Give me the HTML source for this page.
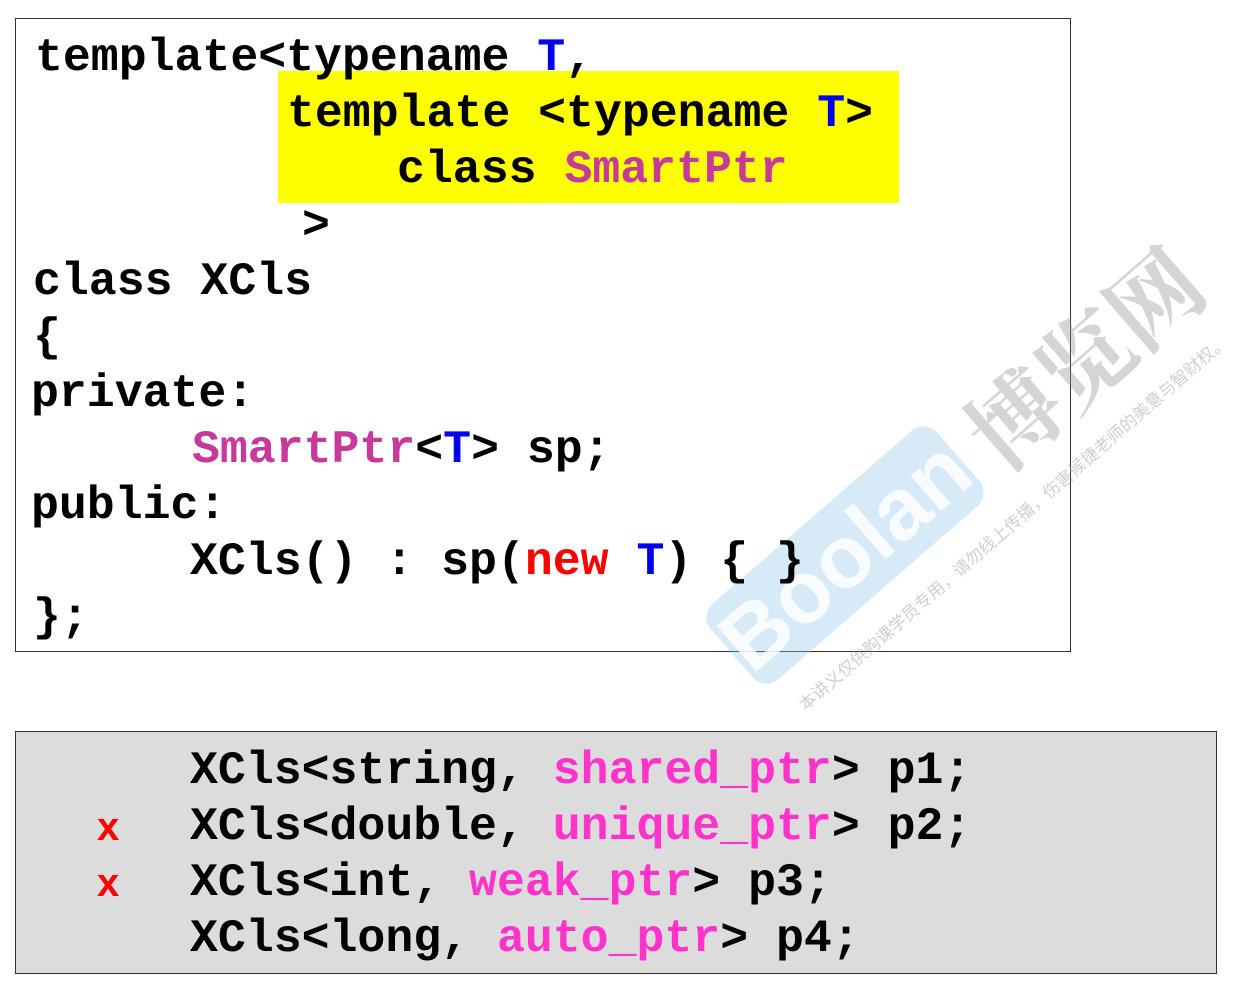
<!DOCTYPE html>
<html><head><meta charset="utf-8"><style>
body{margin:0;width:1243px;height:993px;background:#fff;position:relative;overflow:hidden;font-family:"Liberation Mono",monospace;font-weight:bold;font-size:46.5px;}
.b{position:absolute;}
.l{position:absolute;line-height:56px;height:56px;white-space:pre;color:#000;}
.bl{color:#0000ee}.pk{color:#c8399e}.rd{color:#ff0000}.mg{color:#ff33cc}
.x{font-family:"Liberation Sans",sans-serif;color:#ff0000;font-size:40px;}
.w{position:absolute;white-space:nowrap;transform:translate(-50%,-50%) rotate(-41deg);}
</style></head><body>
<div class="b" style="left:15px;top:18px;width:1054px;height:632px;border:1.5px solid #333;"></div>
<div class="b" style="left:278px;top:71px;width:621px;height:132px;background:#ffff00;"></div>
<div class="b" style="left:15px;top:731px;width:1200px;height:241px;border:1.5px solid #333;background:#dcdcdc;"></div>
<div class="w" style="left:845px;top:555px;width:300px;height:100px;line-height:100px;text-align:center;background:rgba(140,195,235,0.35);border-radius:18px;font-family:'Liberation Sans',sans-serif;font-size:88px;color:rgba(255,255,255,0.85);">Boolan</div>
<div class="w" style="left:1082px;top:355px;font-family:'Noto Serif CJK SC',serif;font-size:92px;color:rgba(150,150,150,0.4);">博览网</div>
<div class="w" style="left:1012px;top:522px;font-family:'Noto Sans CJK SC',sans-serif;font-size:17px;font-weight:normal;color:rgba(150,150,150,0.45);">本讲义仅供购课学员专用，请勿线上传播，伤害候捷老师的美意与智财权。</div>
<div class="l" style="left:35px;top:30px">template&lt;typename <span class="bl">T</span>,</div>
<div class="l" style="left:287px;top:86px">template &lt;typename <span class="bl">T</span>&gt;</div>
<div class="l" style="left:397px;top:142px">class <span class="pk">SmartPtr</span></div>
<div class="l" style="left:302px;top:198px">&gt;</div>
<div class="l" style="left:33px;top:254px">class XCls</div>
<div class="l" style="left:33px;top:310px">{</div>
<div class="l" style="left:31px;top:366px">private:</div>
<div class="l" style="left:192px;top:422px"><span class="pk">SmartPtr</span>&lt;<span class="bl">T</span>&gt; sp;</div>
<div class="l" style="left:31px;top:478px">public:</div>
<div class="l" style="left:190px;top:534px">XCls() : sp(<span class="rd">new</span> <span class="bl">T</span>) { }</div>
<div class="l" style="left:33px;top:590px">};</div>
<div class="l" style="left:190px;top:743px">XCls&lt;string, <span class="mg">shared_ptr</span>&gt; p1;</div>
<div class="l x" style="left:97px;top:799px">x</div>
<div class="l" style="left:190px;top:799px">XCls&lt;double, <span class="mg">unique_ptr</span>&gt; p2;</div>
<div class="l x" style="left:97px;top:855px">x</div>
<div class="l" style="left:190px;top:855px">XCls&lt;int, <span class="mg">weak_ptr</span>&gt; p3;</div>
<div class="l" style="left:190px;top:911px">XCls&lt;long, <span class="mg">auto_ptr</span>&gt; p4;</div>
</body></html>
